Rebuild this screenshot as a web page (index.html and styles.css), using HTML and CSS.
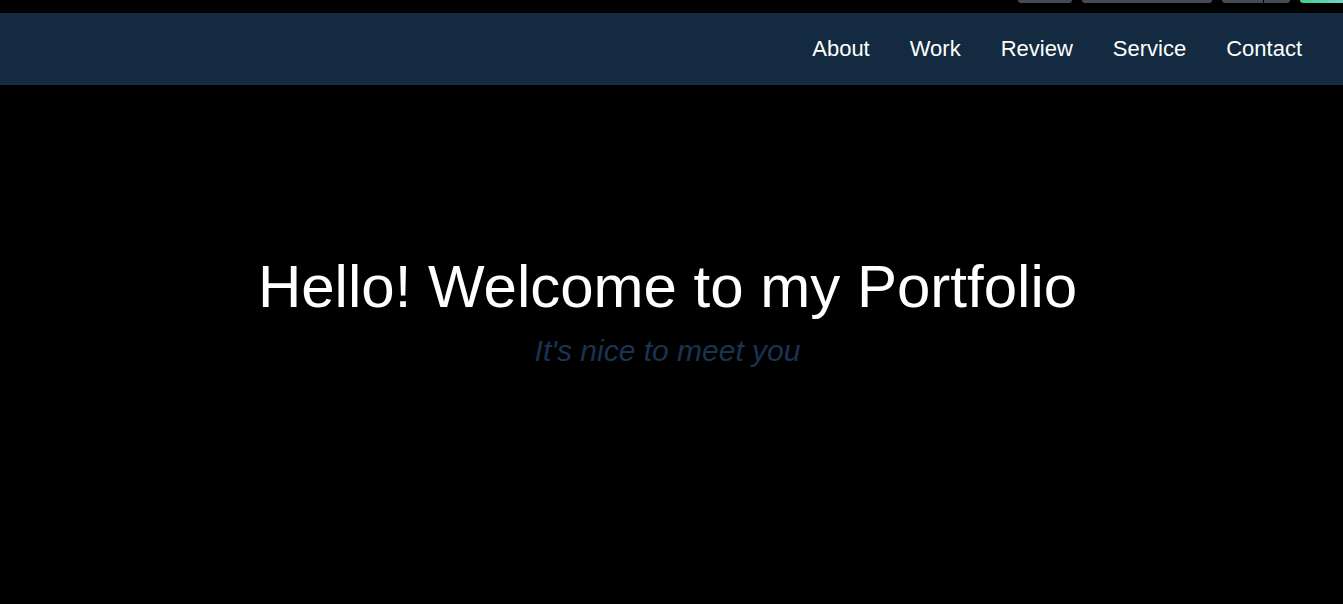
FILE: index.html
```html
<!DOCTYPE html>
<html lang="en">
<head>
<meta charset="utf-8">
<title>Portfolio</title>
<link rel="stylesheet" href="styles.css">
</head>
<body>
<div class="topstrip">
  <span class="tab tab-a"></span>
  <span class="tab tab-b"></span>
  <span class="tab tab-c"><span class="seg"></span><span class="seg seg-r"></span></span>
  <span class="tab tab-green"></span>
</div>
<header class="navbar">
  <nav class="nav">
    <a href="#about">About</a>
    <a href="#work">Work</a>
    <a href="#review">Review</a>
    <a href="#service">Service</a>
    <a href="#contact">Contact</a>
  </nav>
</header>
<main class="hero">
  <h1 class="hero-title">Hello! Welcome to my Portfolio</h1>
  <p class="hero-sub">It's nice to meet you</p>
</main>
</body>
</html>
```
FILE: styles.css
```css
* { box-sizing: border-box; }
html, body {
  margin: 0;
  padding: 0;
  background: #000;
  font-family: "Liberation Sans", Arial, sans-serif;
}
.topstrip {
  height: 13px;
  display: flex;
  justify-content: flex-end;
  align-items: flex-start;
  gap: 10px;
}
.tab {
  display: block;
  height: 3px;
  background: #474a55;
  border-radius: 0 0 4px 4px;
}
.tab-a { width: 54px; }
.tab-b { width: 130px; }
.tab-c { width: 68px; display: flex; gap: 1px; background: transparent; }
.tab-c .seg { flex: 0 0 41px; background: #474a55; border-radius: 0 0 0 4px; }
.tab-c .seg-r { flex: 1; border-radius: 0 0 4px 0; }
.tab-green {
  width: 43px;
  background: linear-gradient(90deg, #3ecf8e, #6fd7c6);
  border-radius: 0 0 0 4px;
}
.navbar {
  height: 72px;
  background: #142a40;
  display: flex;
  align-items: center;
  justify-content: flex-end;
  padding-right: 41px;
}
.nav {
  display: flex;
  gap: 40px;
}
.nav a {
  color: #fff;
  text-decoration: none;
  font-size: 22px;
}
.hero {
  display: flex;
  flex-direction: column;
  align-items: center;
  padding: 167px 8px 0 0;
}
.hero-title {
  margin: 0;
  color: #fff;
  font-weight: normal;
  font-size: 60px;
  line-height: 70px;
}
.hero-sub {
  margin: 11px 0 0;
  color: #1a3350;
  font-style: italic;
  font-size: 30px;
  line-height: 36px;
}
```
